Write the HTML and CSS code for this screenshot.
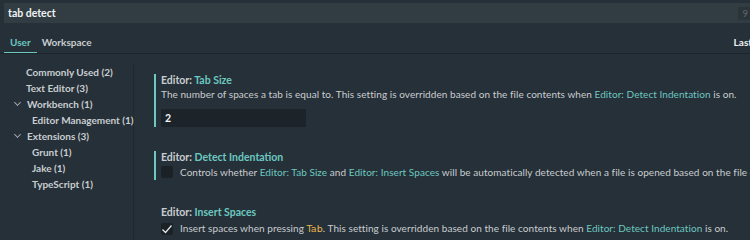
FILE: index.html
```html
<!DOCTYPE html>
<html lang="en">

<head>
    <meta charset="UTF-8">
    <title>Settings</title>
    <link rel="stylesheet" href="styles.css">
</head>

<body>
    <div class="search-bar">
        <span class="search-text">tab detect</span>
        <span class="search-count">9</span>
    </div>

    <div class="tabs">
        <div class="tab active">User</div>
        <div class="tab">Workspace</div>
        <div class="tabs-right">Last</div>
    </div>

    <div class="layout">
        <div class="toc">
            <div class="toc-item">Commonly Used (2)</div>
            <div class="toc-item">Text Editor (3)</div>
            <div class="toc-item"><span class="chevron"></span>Workbench (1)</div>
            <div class="toc-item child">Editor Management (1)</div>
            <div class="toc-item"><span class="chevron"></span>Extensions (3)</div>
            <div class="toc-item child">Grunt (1)</div>
            <div class="toc-item child">Jake (1)</div>
            <div class="toc-item child">TypeScript (1)</div>
        </div>

        <div class="settings">
            <div class="setting modified">
                <div class="setting-title">Editor: <span class="key">Tab Size</span></div>
                <div class="setting-desc">The number of spaces a tab is equal to. This setting is overridden based on the file contents when <span class="link">Editor: Detect Indentation</span> is on.</div>
                <div class="setting-input">2</div>
            </div>

            <div class="setting modified short">
                <div class="setting-title">Editor: <span class="key">Detect Indentation</span></div>
                <div class="check-row">
                    <span class="checkbox"></span>
                    <span class="setting-desc">Controls whether <span class="link">Editor: Tab Size</span> and <span class="link">Editor: Insert Spaces</span> will be automatically detected when a file is opened based on the file contents.</span>
                </div>
            </div>

            <div class="setting last">
                <div class="setting-title">Editor: <span class="key">Insert Spaces</span></div>
                <div class="check-row">
                    <span class="checkbox checked">
                        <svg width="12" height="12" viewBox="0 0 12 12"><path d="M1.5 6.5 L4.5 9.5 L10.5 2.5" fill="none" stroke="#e6e8e9" stroke-width="1.2"/></svg>
                    </span>
                    <span class="setting-desc">Insert spaces when pressing <span class="code">Tab</span>. This setting is overridden based on the file contents when <span class="link">Editor: Detect Indentation</span> is on.</span>
                </div>
            </div>
        </div>
    </div>
</body>

</html>
```

FILE: styles.css
```css
body {
    font-family: 'Lato', 'Noto Sans', sans-serif;
    font-size: 10px;
    background-color: #263038;
    color: #c9cdd0;
    margin: 0;
    padding: 0;
    overflow: hidden;
    white-space: nowrap;
    height: 240px;
}

.search-bar {
    display: flex;
    align-items: center;
    justify-content: space-between;
    height: 20px;
    margin-top: 3px;
    margin-left: 4px;
    padding: 0 4px;
    background-color: #313c43;
}

.search-text {
    color: #f0f2f3;
    font-weight: bold;
    font-size: 10.5px;
}

.search-count {
    background-color: #2a3439;
    color: #5f6b72;
    font-size: 9.5px;
    padding: 1px 4px;
    margin-right: -6px;
}

.tabs {
    display: flex;
    height: 30px;
    border-bottom: 1px solid #1d252a;
    padding-left: 4px;
}

.tab {
    height: 30px;
    box-sizing: border-box;
    padding: 12px 6px 0 6px;
    line-height: 14px;
    color: #c9cdd0;
    font-weight: bold;
}

.tab + .tab {
    padding-left: 5px;
}

.tab.active {
    color: #6cc8c0;
    border-bottom: 1px solid #6cc8c0;
}

.tabs-right {
    margin-left: auto;
    margin-right: -2px;
    padding-top: 12px;
    line-height: 14px;
    color: #eef0f1;
    font-weight: bold;
}

.layout {
    display: flex;
    margin-top: 9px;
}

.toc {
    width: 133px;
    flex-shrink: 0;
    border-right: 1px solid #1f282d;
    padding-top: 1px;
    height: 200px;
}

.toc-item {
    display: flex;
    align-items: center;
    height: 16px;
    padding-left: 26px;
    color: #c9cdd0;
    font-weight: bold;
}

.toc-item.child {
    padding-left: 32px;
}

.chevron {
    width: 4px;
    height: 4px;
    border-right: 1px solid #9aa2a7;
    border-bottom: 1px solid #9aa2a7;
    transform: rotate(45deg);
    margin-left: -11px;
    margin-right: 7px;
    margin-top: -3px;
}

.settings {
    padding-left: 20px;
    padding-top: 11px;
}

.setting {
    padding-left: 5px;
    border-left: 2px solid transparent;
    margin-bottom: 24px;
}

.setting.modified {
    border-left-color: #6cc8c0;
}

.setting.short {
    padding-bottom: 1px;
    margin-bottom: 26px;
}

.setting-title {
    font-weight: bold;
    font-size: 10.5px;
    color: #c9cdd0;
    line-height: 12px;
}

.key {
    color: #6cc8c0;
}

.setting-desc {
    margin-top: 1px;
    line-height: 14px;
    letter-spacing: 0.06px;
    color: #c9cdd0;
}

.link {
    color: #6cc8c0;
}

.code {
    color: #e8b64e;
    font-family: 'DejaVu Sans', sans-serif;
    font-size: 9.5px;
}

.setting-input {
    margin-top: 8px;
    width: 141px;
    height: 18px;
    line-height: 18px;
    padding-left: 4px;
    background-color: #1c2429;
    color: #f4f5f6;
    font-weight: bold;
    font-size: 10.5px;
}

.check-row {
    display: flex;
    align-items: center;
    margin-top: 2px;
}

.setting.last .check-row {
    margin-top: 3px;
}

.check-row .setting-desc {
    margin-top: 0;
}

.checkbox {
    display: flex;
    align-items: center;
    justify-content: center;
    width: 12px;
    height: 12px;
    margin-right: 7px;
    background-color: #1b2227;
    border-radius: 2px;
}
```
